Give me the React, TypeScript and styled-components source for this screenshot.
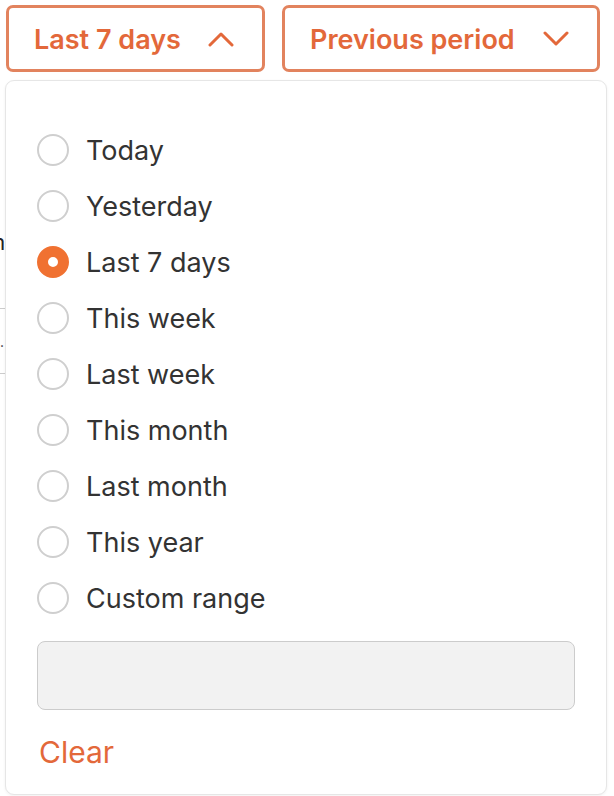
import * as React from 'react'
import styled, { createGlobalStyle } from 'styled-components'

const GlobalStyle = createGlobalStyle`
  html, body {
    margin: 0;
    padding: 0;
    background: #fff;
    font-family: Inter, "Noto Sans", "Liberation Sans", sans-serif;
    overflow: hidden;
  }
`

const orange = '#e3683a'

const Page = styled.div`
  position: relative;
  width: 614px;
  height: 796px;
  overflow: hidden;
`

const Toolbar = styled.div`
  display: flex;
  gap: 17px;
  padding: 5px 0 0 6px;
`

const Toggle = styled.button<{ $width: number }>`
  width: ${(p) => p.$width}px;
  height: 67px;
  box-sizing: border-box;
  display: flex;
  align-items: center;
  justify-content: space-between;
  padding: 1px 28px 0 25px;
  background: #fff;
  border: 3px solid #e2835e;
  border-radius: 7px;
  color: ${orange};
  font-family: inherit;
  font-size: 27px;
  font-weight: 600;
  cursor: pointer;
`

// what lies under the open menu
const Backdrop = styled.div`
  margin-top: 158px;
  margin-left: -14px;
`

const BackLabel = styled.div`
  font-size: 22px;
  color: #222;
  line-height: 24px;
`

const BackField = styled.div`
  margin-top: 54px;
  width: 300px;
  height: 66px;
  border: 1px solid #ccc;
  border-left: none;
  box-sizing: border-box;
  display: flex;
  align-items: center;
  justify-content: flex-end;
  padding-right: 281px;
  color: #333;
  font-size: 14px;
`

const Menu = styled.div`
  position: absolute;
  top: 80px;
  left: 5px;
  width: 602px;
  height: 715px;
  box-sizing: border-box;
  background: #fff;
  border: 1.5px solid #e6e6e6;
  border-radius: 9px;
  box-shadow: 0 1px 3px rgba(0, 0, 0, 0.06);
  padding: 41px 31px 0 31px;
`

const Options = styled.div`
  display: flex;
  flex-direction: column;
`

const Option = styled.label`
  display: flex;
  align-items: center;
  height: 56px;
  gap: 17px;
  font-size: 27px;
  color: #333;
  cursor: pointer;
`

const Radio = styled.span<{ $checked?: boolean }>`
  width: 32px;
  height: 32px;
  box-sizing: border-box;
  border-radius: 50%;
  flex-shrink: 0;
  border: ${(p) => (p.$checked ? '11px solid #f07131' : '2px solid #cfcfcf')};
  background: #fff;
`

const RangeInput = styled.div`
  margin-top: 15px;
  height: 69px;
  box-sizing: border-box;
  background: #f2f2f2;
  border: 1.5px solid #cccccc;
  border-radius: 8px;
  width: 538px;
`

const ClearButton = styled.button`
  margin-top: 24px;
  padding: 0 0 0 2px;
  border: none;
  background: none;
  color: ${orange};
  font-family: inherit;
  font-size: 30px;
  font-weight: 400;
  cursor: pointer;
`

const Chevron = ({ up }: { up?: boolean }) => (
  <svg width="26" height="16" viewBox="0 0 26 16" fill="none">
    <path
      d={up ? 'M2 14 L13 3 L24 14' : 'M2 2 L13 13 L24 2'}
      stroke={orange}
      strokeWidth="3"
      strokeLinecap="round"
      strokeLinejoin="round"
    />
  </svg>
)

const options = [
  'Today',
  'Yesterday',
  'Last 7 days',
  'This week',
  'Last week',
  'This month',
  'Last month',
  'This year',
  'Custom range',
]

export default function App() {
  const [selected, setSelected] = React.useState('Last 7 days')
  return (
    <Page>
      <GlobalStyle />
      <Toolbar>
        <Toggle $width={259}>
          Last 7 days
          <Chevron up />
        </Toggle>
        <Toggle $width={318}>
          Previous period
          <Chevron />
        </Toggle>
      </Toolbar>
      <Backdrop>
        <BackLabel>m</BackLabel>
        <BackField>.</BackField>
      </Backdrop>
      <Menu>
        <Options>
          {options.map((o) => (
            <Option key={o} onClick={() => setSelected(o)}>
              <Radio $checked={selected === o} />
              {o}
            </Option>
          ))}
        </Options>
        <RangeInput />
        <ClearButton>Clear</ClearButton>
      </Menu>
    </Page>
  )
}
